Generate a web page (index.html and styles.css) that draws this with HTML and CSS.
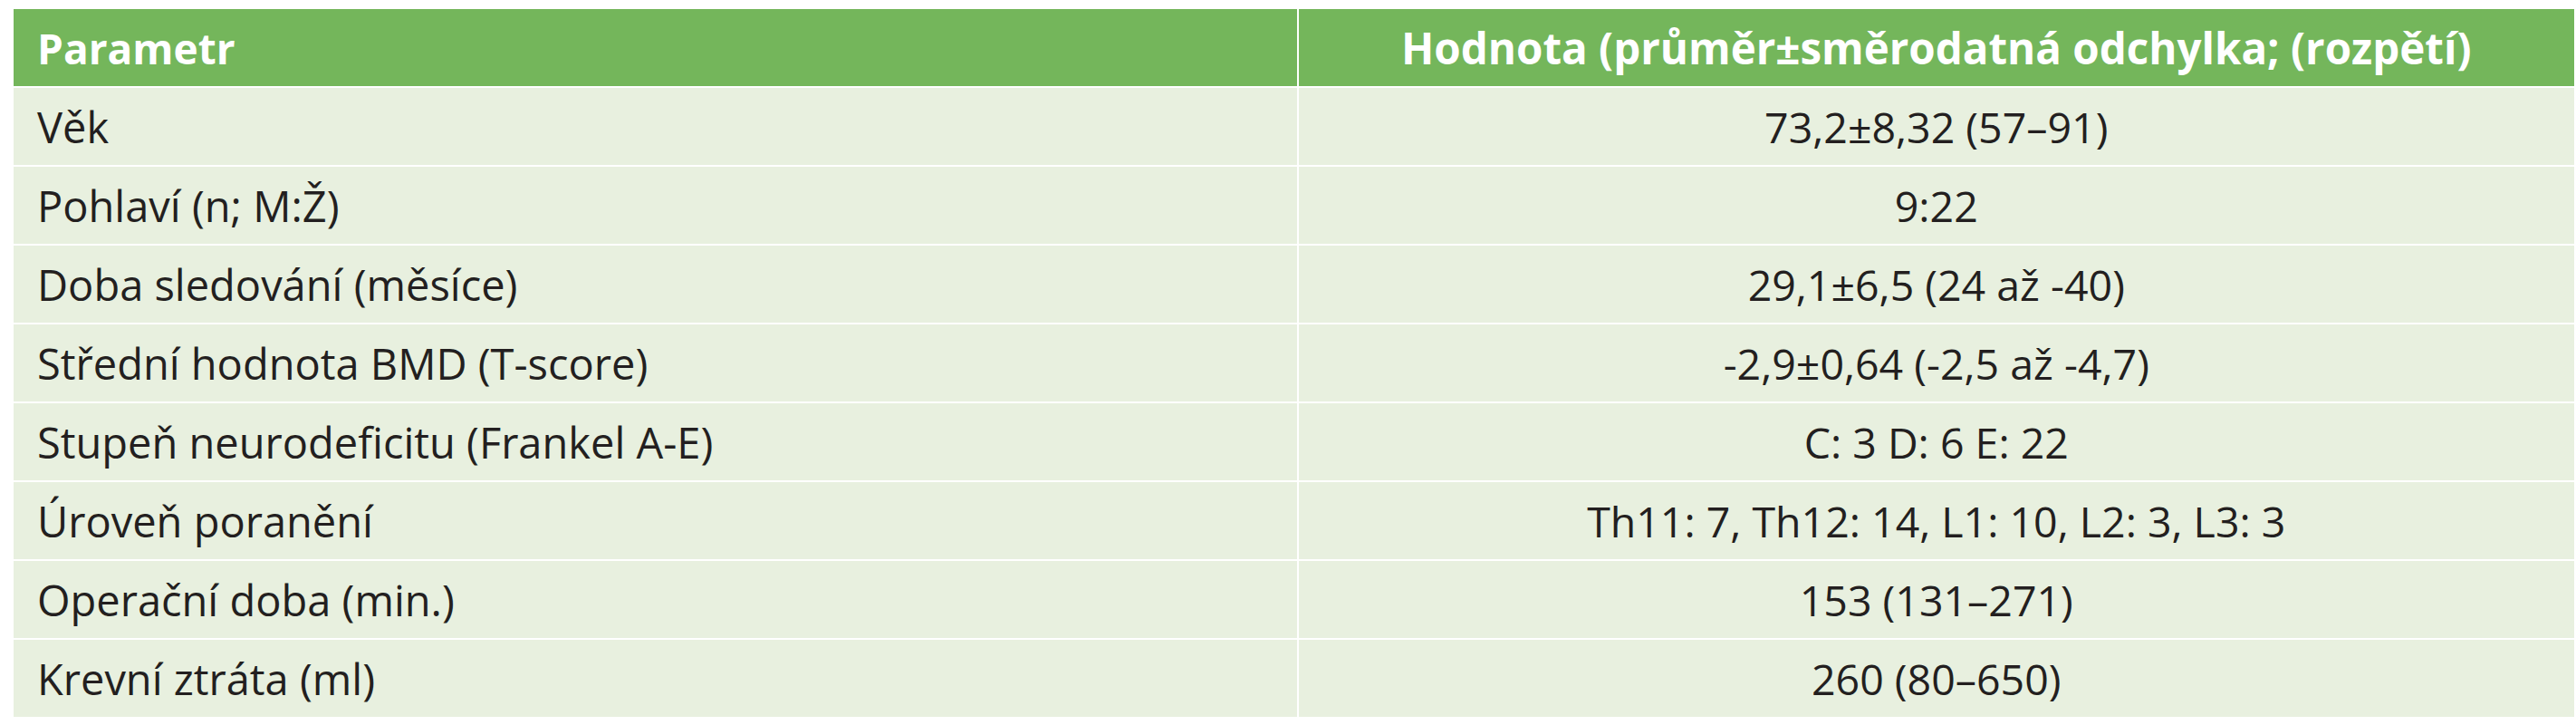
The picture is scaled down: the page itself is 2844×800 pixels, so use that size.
FILE: index.html
```html
<!DOCTYPE html>
<html lang="cs">
<head>
<meta charset="utf-8">
<title>Parametry souboru</title>
<link rel="stylesheet" href="styles.css">
</head>
<body>
<table class="params">
  <colgroup>
    <col class="col-name">
    <col class="col-value">
  </colgroup>
  <thead>
    <tr>
      <th class="name">Parametr</th>
      <th class="value">Hodnota (průměr±směrodatná odchylka; (rozpětí)</th>
    </tr>
  </thead>
  <tbody>
    <tr><td class="name">Věk</td><td class="value">73,2±8,32 (57–91)</td></tr>
    <tr><td class="name">Pohlaví (n; M:Ž)</td><td class="value">9:22</td></tr>
    <tr><td class="name">Doba sledování (měsíce)</td><td class="value">29,1±6,5 (24 až -40)</td></tr>
    <tr><td class="name">Střední hodnota BMD (T-score)</td><td class="value">-2,9±0,64 (-2,5 až -4,7)</td></tr>
    <tr><td class="name">Stupeň neurodeficitu (Frankel A-E)</td><td class="value">C: 3 D: 6 E: 22</td></tr>
    <tr><td class="name">Úroveň poranění</td><td class="value">Th11: 7, Th12: 14, L1: 10, L2: 3, L3: 3</td></tr>
    <tr><td class="name">Operační doba (min.)</td><td class="value">153 (131–271)</td></tr>
    <tr><td class="name">Krevní ztráta (ml)</td><td class="value">260 (80–650)</td></tr>
  </tbody>
</table>
</body>
</html>
```
FILE: styles.css
```css
html {
  overflow: hidden;
}
body {
  margin: 0;
  background: #ffffff;
  font-family: "Open Sans", "Noto Sans", sans-serif;
  color: #231f20;
}
.params {
  border-collapse: separate;
  border-spacing: 2px;
  table-layout: fixed;
  margin: 8px 0 0 13px;
}
.col-name {
  width: 1418px;
}
.col-value {
  width: 1409px;
}
.params th,
.params td {
  height: 85px;
  padding: 0;
  vertical-align: middle;
  white-space: nowrap;
}
.params th {
  background: #74b65b;
  color: #ffffff;
  font-weight: 700;
  font-size: 46px;
}
.params th.value {
  font-size: 47.5px;
}
.params td {
  background: #e8f0df;
  font-weight: 400;
}
.params td.name {
  font-size: 47px;
}
.params td.value {
  font-size: 46.5px;
}
.name {
  text-align: left;
  padding-left: 26px !important;
}
.value {
  text-align: center;
}
```
